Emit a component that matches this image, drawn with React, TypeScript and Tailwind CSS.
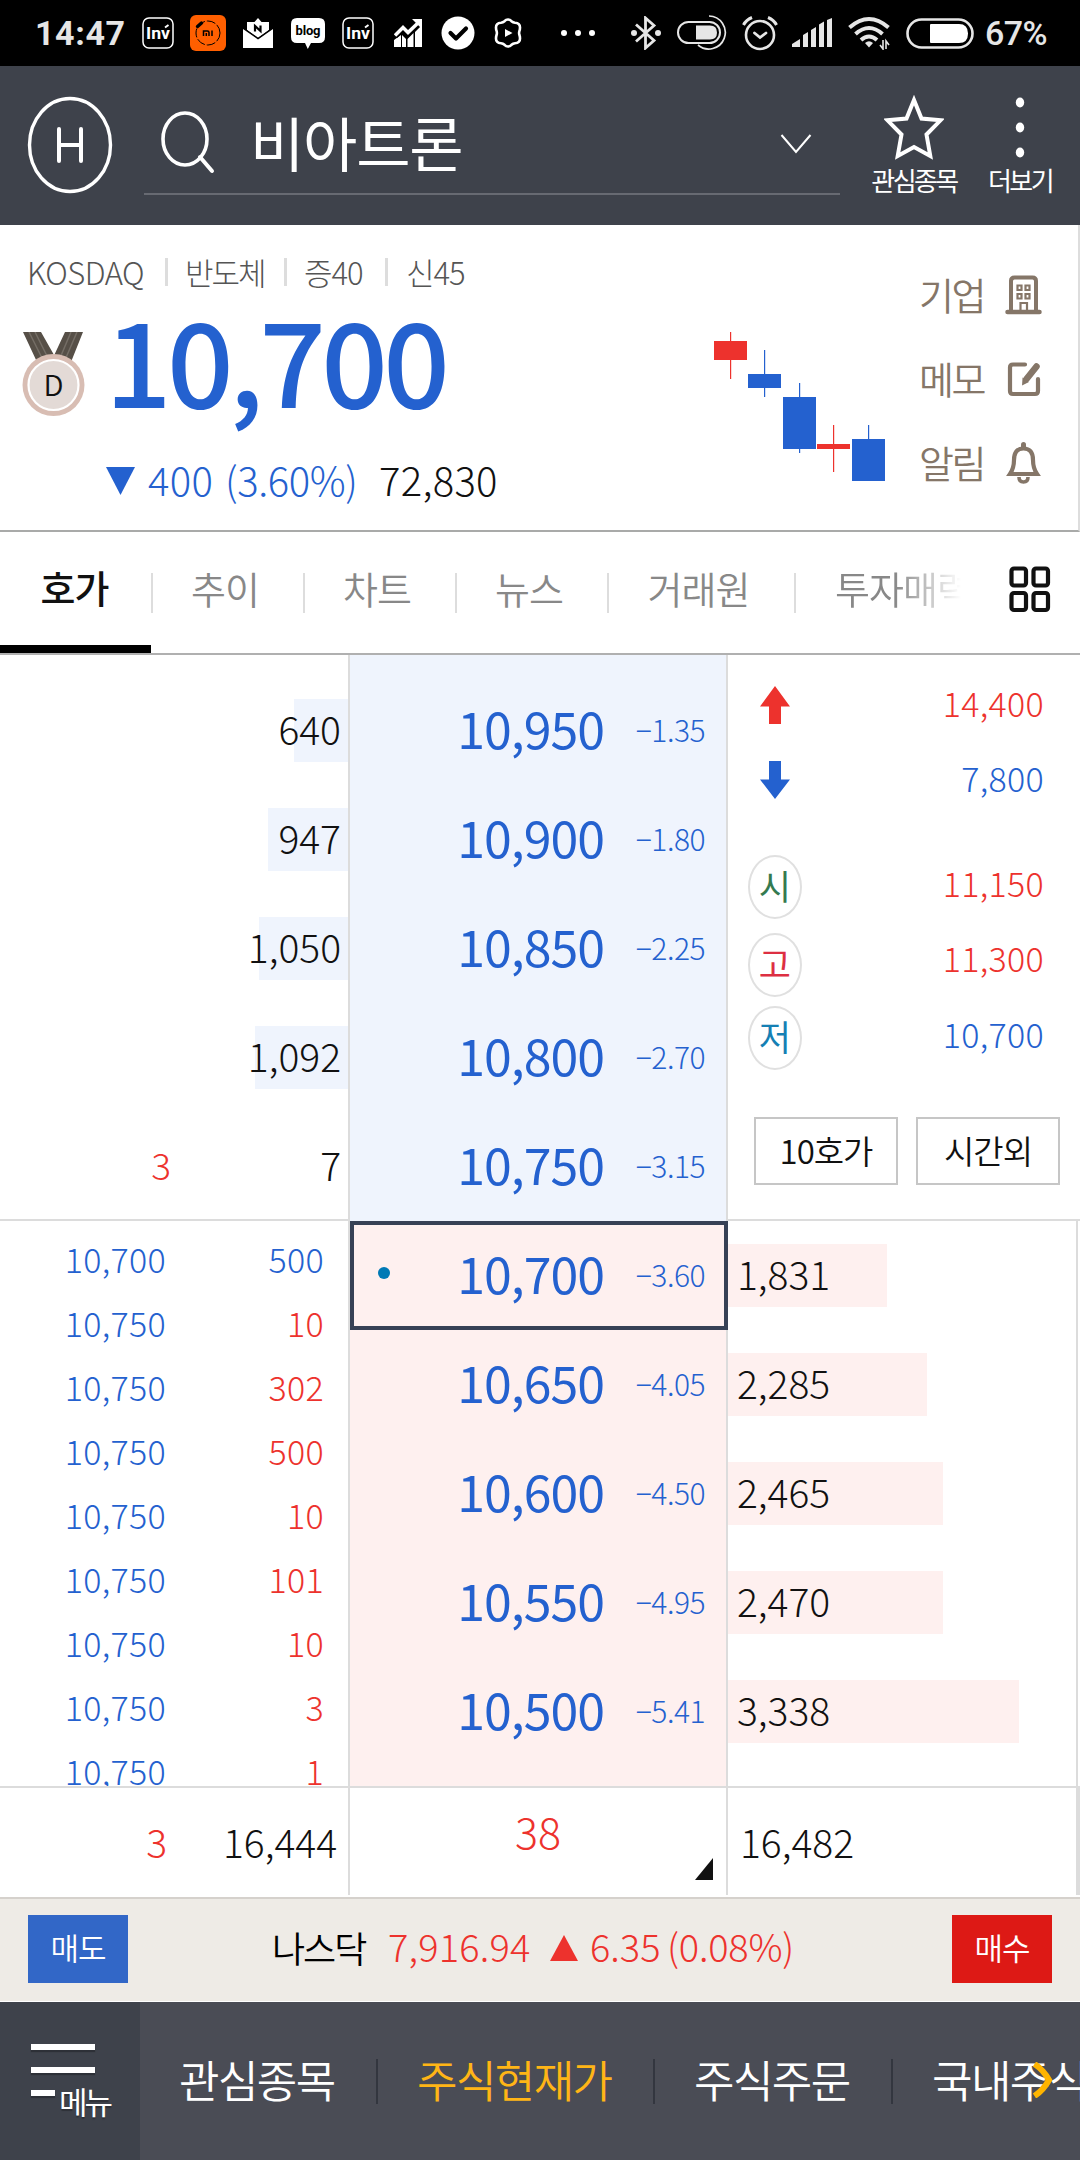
import React from "react";
import clsx from "clsx";

// ─── Data ─────────────────────────────────────────────────────────────────────
interface Ask {
  qty: string;
  bar: number;
  price: string;
  pct: string;
  diff?: string;
}

const ASKS: Ask[] = [
  { qty: "640", bar: 54, price: "10,950", pct: "−1.35" },
  { qty: "947", bar: 80, price: "10,900", pct: "−1.80" },
  { qty: "1,050", bar: 89, price: "10,850", pct: "−2.25" },
  { qty: "1,092", bar: 93, price: "10,800", pct: "−2.70" },
  { qty: "7", bar: 0, price: "10,750", pct: "−3.15", diff: "3" },
];

const BIDS = [
  { qty: "1,831", bar: 159, price: "10,700", pct: "−3.60" },
  { qty: "2,285", bar: 199, price: "10,650", pct: "−4.05" },
  { qty: "2,465", bar: 215, price: "10,600", pct: "−4.50" },
  { qty: "2,470", bar: 215, price: "10,550", pct: "−4.95" },
  { qty: "3,338", bar: 291, price: "10,500", pct: "−5.41" },
];

const TRADES = [
  { price: "10,700", qty: "500", up: false },
  { price: "10,750", qty: "10", up: true },
  { price: "10,750", qty: "302", up: true },
  { price: "10,750", qty: "500", up: true },
  { price: "10,750", qty: "10", up: true },
  { price: "10,750", qty: "101", up: true },
  { price: "10,750", qty: "10", up: true },
  { price: "10,750", qty: "3", up: true },
  { price: "10,750", qty: "1", up: true },
];

const RED = "#ed322d";
const BLUE = "#2461cf";

const CANDLES = [
  { x: 0, top: 9, h: 19, high: 0, low: 47, color: RED },
  { x: 34, top: 42, h: 14, high: 18, low: 65, color: BLUE },
  { x: 69, top: 65, h: 52, high: 51, low: 121, color: BLUE },
  { x: 103, top: 112, h: 5, high: 93, low: 140, color: RED },
  { x: 138, top: 107, h: 42, high: 93, low: 149, color: BLUE },
];

// ─── Status bar ───────────────────────────────────────────────────────────────
function InvIcon({ className }: { className: string }) {
  return (
    <svg width="32" height="32" viewBox="0 0 32 32" className={className}>
      <rect x="1" y="1" width="30" height="30" rx="6" fill="none" stroke="#fff" strokeWidth="1.5" />
      <text x="16" y="22" textAnchor="middle" fill="#fff" fontSize="17" fontWeight="700" fontFamily="Roboto, sans-serif" textLength="24" lengthAdjust="spacingAndGlyphs">
        Inv
      </text>
      <path d="M23 10.500l3.500-2.500" stroke="#fff" strokeWidth="2" />
    </svg>
  );
}

function StatusBar() {
  return (
    <div className="flex h-[66px] items-center bg-black pl-[35px] font-['Roboto',sans-serif] text-[34px] leading-none text-[#e6e6e6]">
      <span className="w-[107px] font-bold tracking-[0.6px]">14:47</span>
      <InvIcon className="" />
      <svg width="36" height="36" viewBox="0 0 36 36" className="ml-4">
        <rect width="36" height="36" rx="6" fill="#ff5f00" />
        <circle cx="18" cy="18" r="12" fill="none" stroke="#000" strokeWidth="1" strokeDasharray="9 2" />
        <path d="M7 12l5-5" stroke="#ff5f00" strokeWidth="6" />
        <path d="M7.500 11.500l4-3.500" stroke="#000" strokeWidth="3.400" strokeLinecap="round" />
        <path d="M13.500 21v-5h4q1.500 0 1.500 1.500V21M16.300 18v3M22 15.500V21" fill="none" stroke="#000" strokeWidth="1.500" />
      </svg>
      <svg width="30" height="31" viewBox="0 0 30 31" className="ml-[17px]">
        <path d="M0 10l15 11 15-11v20H0z" fill="#fff" />
        <path d="M4 4h7.500L15 0l3.500 4H26v8l-11 8-11-8z" fill="#fff" />
        <path d="M0 10l15 10.500L30 10" fill="none" stroke="#000" strokeWidth="1.500" />
        <path d="M12 13.500V8l5.500 5V7.500" fill="none" stroke="#000" strokeWidth="2.200" />
      </svg>
      <svg width="34" height="31" viewBox="0 0 34 31" className="ml-[18px]">
        <path d="M6 0h22q6 0 6 6v13q0 6-6 6h-8l-3.200 6L14 25H6q-6 0-6-6V6q0-6 6-6z" fill="#fff" />
        <text x="17" y="17" textAnchor="middle" fill="#000" fontSize="13" fontWeight="700" fontFamily="Roboto, sans-serif" textLength="25">
          blog
        </text>
      </svg>
      <InvIcon className="ml-[17px]" />
      <svg width="28" height="28" viewBox="0 0 28 28" className="ml-5">
        <path d="M0 21l7-5v12H0zM8 16l4 4v8H8zM13.500 20l6-6v14h-6zM21 13l7-7v22h-7z" fill="#fff" />
        <path d="M1 17l8-8 5 5L24 4" fill="none" stroke="#000" strokeWidth="6" />
        <path d="M1 16.500l8-8 5 5L25 3" fill="none" stroke="#fff" strokeWidth="3.500" />
        <path d="M18 0h10v10z" fill="#fff" />
      </svg>
      <svg width="34" height="34" viewBox="0 0 34 34" className="ml-[19px]">
        <circle cx="17" cy="17" r="16.500" fill="#fff" />
        <path d="M9.500 17l5.500 5.500 10-10" fill="none" stroke="#000" strokeWidth="4.200" strokeLinecap="round" strokeLinejoin="round" />
      </svg>
      <svg width="30" height="32" viewBox="0 0 30 32" className="ml-[18px]">
        <path d="M15 2.500q2 0 3.500 1.700 1.500 1.400 3.500 1.600 5 .2 5 4.700 0 2-.6 3.500-.6 2 0 4 .6 1.500.6 3.500 0 4.500-5 4.700-2 .2-3.500 1.600-1.500 1.700-3.500 1.700t-3.500-1.700q-1.500-1.400-3.500-1.600-5-.2-5-4.700 0-2 .6-3.500.6-2 0-4Q3 12.500 3 10.500q0-4.500 5-4.700 2-.2 3.500-1.600Q13 2.500 15 2.500z" fill="none" stroke="#fff" strokeWidth="2.600" />
        <path d="M12 12l7.500 4-7.500 4z" fill="#fff" />
      </svg>
      <div className="ml-[38px] flex gap-2">
        <i className="size-1.5 rounded-full bg-white" />
        <i className="size-1.5 rounded-full bg-white" />
        <i className="size-1.5 rounded-full bg-white" />
      </div>
      <svg width="30" height="34" viewBox="0 0 30 34" className="ml-[36px]">
        <path d="M5 8.500l18 16L14.500 32V2L23 9.500 5 25.500" fill="none" stroke="#e6e6e6" strokeWidth="2.800" />
        <circle cx="3" cy="17" r="3" fill="#e6e6e6" />
        <circle cx="27" cy="17" r="3" fill="#e6e6e6" />
      </svg>
      <svg width="50" height="36" viewBox="0 0 50 36" className="ml-4">
        <rect x="1" y="7" width="42" height="21" rx="10.500" fill="none" stroke="#e6e6e6" strokeWidth="2" />
        <path d="M19 10.500h14q7 0 7 7t-7 7H19z" fill="#e6e6e6" />
        <path d="M32 1a16.500 16.500 0 1 1-11 29" fill="none" stroke="#e6e6e6" strokeWidth="1.700" />
      </svg>
      <svg width="36" height="36" viewBox="0 0 36 36" className="ml-[15px]">
        <circle cx="18" cy="20" r="14" fill="none" stroke="#e6e6e6" strokeWidth="2.600" />
        <path d="M1.500 10Q4 5 10 2.500M34.500 10Q32 5 26 2.500" fill="none" stroke="#e6e6e6" strokeWidth="3" />
        <path d="M12.500 18l5.500 4.500 6-4.500" fill="none" stroke="#e6e6e6" strokeWidth="2.800" strokeLinecap="round" />
      </svg>
      <svg width="40" height="30" viewBox="0 0 40 30" className="ml-[14px]">
        <path d="M0 29v-3l8-5v8zM11 17l5-3v15h-5zM19 12l5-3v20h-5zM27 6.500l5-3V29h-5zM35 2l5-2v29h-5z" fill="#e6e6e6" />
      </svg>
      <svg width="42" height="34" viewBox="0 0 42 34" className="ml-4">
        <path d="M1.500 11.500q19.500-17 39 0M7.500 18q13.500-12 27 0M13 24q8-7 16 0" fill="none" stroke="#e6e6e6" strokeWidth="4" />
        <path d="M17 27q4-3.500 8 0l-4 4.500z" fill="#e6e6e6" />
        <path d="M35 24v9l-3-4M38 33v-8l3 4" fill="none" stroke="#e6e6e6" strokeWidth="1.600" />
      </svg>
      <svg width="68" height="31" viewBox="0 0 68 31" className="ml-4">
        <rect x="1.500" y="1.500" width="65" height="28" rx="14" fill="none" stroke="#e6e6e6" strokeWidth="2.600" />
        <path d="M25 6h28q9 0 9 9.500T53 25H25q-1 0-1-1V7q0-1 1-1z" fill="#fff" />
      </svg>
      <span className="ml-[11px] font-medium tracking-[-0.6px]">67%</span>
    </div>
  );
}

// ─── Header ───────────────────────────────────────────────────────────────────
function Header() {
  return (
    <header className="flex h-[159px] bg-[#3e424b] text-white">
      <svg width="86" height="98" viewBox="0 0 86 98" className="mt-[30px] ml-[27px]">
        <ellipse cx="43" cy="49" rx="40.500" ry="46.500" fill="none" stroke="#fff" strokeWidth="3.400" />
        <path d="M32 33v32M54 33v32M32 49h22" fill="none" stroke="#fff" strokeWidth="4" strokeLinecap="round" />
      </svg>
      <div className="ml-[31px] flex h-[129px] w-[696px] items-center border-b-2 border-[#676a72] pr-7 pl-4">
        <svg width="56" height="66" viewBox="0 0 56 66" className="mt-[28px]">
          <ellipse cx="25" cy="28" rx="22" ry="26" fill="none" stroke="#fff" strokeWidth="3.600" />
          <path d="M40 46l12 14" stroke="#fff" strokeWidth="4" strokeLinecap="round" />
        </svg>
        <span className="mt-[23px] ml-[34px] text-[59px] leading-none font-normal tracking-[-1.200px]">비아트론</span>
        <svg width="32" height="20" viewBox="0 0 32 20" className="mt-[28px] ml-auto">
          <path d="M1.500 1l14.500 17L30.500 1" fill="none" stroke="#fff" strokeWidth="2" />
        </svg>
      </div>
      <div className="ml-[30px] flex w-[88px] flex-col items-center pt-[29px]">
        <svg width="60" height="66" viewBox="0 0 60 66">
          <path d="M30 5l7.500 18.500 19 1.800-14 14.200 3.800 21.500L30 52l-16.300 9 3.800-21.500-14-14.200 19-1.800z" fill="none" stroke="#fff" strokeWidth="4" />
        </svg>
        <span className="mt-[6px] text-[26px] leading-none font-normal tracking-[-2.600px] whitespace-nowrap">관심종목</span>
      </div>
      <div className="ml-[30px] flex w-[64px] flex-col items-center pt-[31px]">
        <svg width="10" height="62" viewBox="0 0 10 62">
          <ellipse cx="5" cy="5.500" rx="4.200" ry="5" fill="#fff" />
          <ellipse cx="5" cy="30.500" rx="4.200" ry="5" fill="#fff" />
          <ellipse cx="5" cy="55.500" rx="4.200" ry="5" fill="#fff" />
        </svg>
        <span className="mt-[8px] text-[26px] leading-none font-normal tracking-[-2.600px] whitespace-nowrap">더보기</span>
      </div>
    </header>
  );
}

// ─── Quote summary ────────────────────────────────────────────────────────────
function Medal() {
  return (
    <svg width="64" height="84" viewBox="0 0 64 84">
      <path d="M1 0h18l17 30H15zM61 0H43L29 30h20z" fill="#564f47" />
      <path d="M7 0l14 28M13 0l13 26M55 0L43 28M49 0L38 26" stroke="#746d65" strokeWidth="1.500" />
      <circle cx="31.500" cy="53" r="31" fill="#d8bdb3" />
      <circle cx="31.500" cy="53" r="25" fill="#e3dad6" stroke="#fff" strokeWidth="2.200" />
      <text x="31.500" y="63.500" textAnchor="middle" fontSize="28" fontWeight="350" fill="#111" textLength="20" lengthAdjust="spacingAndGlyphs">
        D
      </text>
    </svg>
  );
}

function CandleChart() {
  return (
    <svg width="172" height="150" viewBox="0 0 172 150">
      {CANDLES.map((c) => (
        <g key={c.x} fill={c.color}>
          <rect x={c.x + 16} y={c.high} width="1.200" height={c.low - c.high} />
          <rect x={c.x} y={c.top} width="33" height={c.h} />
        </g>
      ))}
    </svg>
  );
}

function QuoteSummary() {
  return (
    <section className="flex h-[307px] border-r-2 border-b-2 border-r-[#ddd] border-b-[#a9aaa9] bg-white">
      <div className="w-[714px] shrink-0">
        <div className="mt-[31px] flex h-8 items-center pl-[27px] text-[31px] leading-none font-light text-[#555]">
          <span className="w-[138px] pb-0.5 tracking-[-0.500px]">KOSDAQ</span>
          <i className="h-7 w-[3px] bg-[#ddd]" />
          <span className="ml-[17px] w-[99px] pb-0.5 tracking-[-2px]">반도체</span>
          <i className="h-7 w-[3px] bg-[#ddd]" />
          <span className="ml-[17px] w-[81px] pb-0.5 tracking-[-1px]">증40</span>
          <i className="h-7 w-[3px] bg-[#ddd]" />
          <span className="ml-[18px] pb-0.5 tracking-[-1px]">신45</span>
        </div>
        <div className="mt-[4px] flex h-[136px] items-start pl-[22px]">
          <div className="pt-[40px]">
            <Medal />
          </div>
          <span className="ml-[19px] text-[117px] leading-[130px] font-medium tracking-[-4.700px] text-[#2461cf]">10,700</span>
        </div>
        <div className="mt-[23px] flex h-[56px] items-center pl-[106px] text-[40px] leading-none font-light">
          <svg width="30" height="28" viewBox="0 0 30 28" className="mt-1">
            <path d="M0 0h29L14.500 28z" fill={BLUE} />
          </svg>
          <span className="ml-3 w-[77px] tracking-[0.300px] text-[#2461cf]">400</span>
          <span className="w-[154px] tracking-[-0.400px] text-[#2461cf]">(3.60%)</span>
          <span className="tracking-[0.300px] text-[#111]">72,830</span>
        </div>
      </div>
      <div className="shrink-0 pt-[107px]">
        <CandleChart />
      </div>
      <div className="ml-[33px] flex w-[124px] flex-col pt-[45px] text-[38px] leading-none font-[350] tracking-[-2.500px] text-[#857668]">
        <div className="flex h-[49px] items-center justify-between">
          <span className="pb-0.5">기업</span>
          <svg width="38" height="40" viewBox="0 0 38 40">
            <path d="M6 36V6q0-3.500 3.500-3.500h18Q31 2.500 31 6v30" fill="none" stroke="#857668" strokeWidth="4" />
            <path d="M2.500 37h32" stroke="#857668" strokeWidth="4.500" strokeLinecap="round" />
            <path d="M12.500 10.500h4v4.500h-4zM20.500 10.500h4v4.500h-4zM12.500 19h4v4.500h-4zM20.500 19h4v4.500h-4zM15.500 35v-7h6.500v7" fill="none" stroke="#857668" strokeWidth="2.200" />
          </svg>
        </div>
        <div className="mt-[35px] flex h-[49px] items-center justify-between">
          <span className="pb-0.5">메모</span>
          <svg width="38" height="40" viewBox="0 0 38 40">
            <path d="M20 5.500H8q-3 0-3 3V32q0 3 3 3h22q3 0 3-3V20" fill="none" stroke="#857668" strokeWidth="4.200" strokeLinecap="round" />
            <path d="M31.500 7.500L21.500 20" stroke="#857668" strokeWidth="6.500" strokeLinecap="round" />
            <path d="M17.500 18.500l-.500 8 7-3.500z" fill="#857668" />
          </svg>
        </div>
        <div className="mt-[35px] flex h-[49px] items-center justify-between">
          <span className="pb-0.5">알림</span>
          <svg width="38" height="44" viewBox="0 0 38 44">
            <path d="M5 33q4-6 4-14Q9 7.500 18.500 7.500T28 19q0 8 4 14z" fill="none" stroke="#857668" strokeWidth="4.200" />
            <path d="M18.500 3.500v3" stroke="#857668" strokeWidth="5" strokeLinecap="round" />
            <path d="M14 36q0 5 4.500 5t4.500-5" fill="none" stroke="#857668" strokeWidth="3.600" />
          </svg>
        </div>
      </div>
    </section>
  );
}

// ─── Tabs ─────────────────────────────────────────────────────────────────────
function Tabs() {
  return (
    <nav className="flex h-[123px] items-center border-b-2 border-[#b0b0b0] bg-white text-[38px] leading-none font-[350] tracking-[-1px] text-[#888]">
      <div className="flex h-full w-[151px] items-center justify-center border-b-8 border-black pr-0.5 pb-[3px] font-medium text-[#111]">
        호가
      </div>
      <i className="h-10 w-0.5 bg-[#ddd]" />
      <span className="w-[150px] pr-1.5 pb-2.5 text-center">추이</span>
      <i className="h-10 w-0.5 bg-[#ddd]" />
      <span className="w-[150px] pr-1.5 pb-2.5 text-center">차트</span>
      <i className="h-10 w-0.5 bg-[#ddd]" />
      <span className="w-[150px] pr-1.5 pb-2.5 text-center">뉴스</span>
      <i className="h-10 w-0.5 bg-[#ddd]" />
      <span className="w-[185px] pr-1.5 pb-2.5 text-center">거래원</span>
      <i className="h-10 w-0.5 bg-[#ddd]" />
      <span className="w-[165px] overflow-hidden pb-2.5 pl-[39px] whitespace-nowrap [mask-image:linear-gradient(to_right,#000_60%,transparent_100%)]">
        투자매력
      </span>
      <svg width="42" height="47" viewBox="0 0 42 47" className="mb-1.5 ml-[48px]">
        <g fill="none" stroke="#111" strokeWidth="4.200">
          <rect x="2.500" y="2.500" width="14.500" height="17" rx="2.500" />
          <rect x="24.500" y="2.500" width="14.500" height="17" rx="2.500" />
          <rect x="2.500" y="27" width="14.500" height="17" rx="2.500" />
          <rect x="24.500" y="27" width="14.500" height="17" rx="2.500" />
        </g>
      </svg>
    </nav>
  );
}

// ─── Order book ───────────────────────────────────────────────────────────────
function PriceRow({ price, pct, current }: { price: string; pct: string; current?: boolean }) {
  return (
    <div
      className={clsx(
        "flex h-[109px] items-center leading-none text-[#2461cf]",
        current ? "-mr-0.5 border-4 border-[#374155] pr-[19px] pl-[24px]" : "pr-[21px] pl-7",
      )}
    >
      {current && <i className="mb-1.5 h-3 w-3 rounded-full bg-[#0079b5]" />}
      <span className="ml-auto pb-[7px] text-[50px] font-normal tracking-[-1px]">{price}</span>
      <span className="w-[101px] pb-1 text-right text-[30px] font-light tracking-[-0.500px]">{pct}</span>
    </div>
  );
}

function AskQuantities() {
  return (
    <div className="h-[566px] border-b-2 border-[#dcdcdc] pt-[21px]">
      {ASKS.map((a) => (
        <div key={a.price} className="relative flex h-[109px] items-center justify-end pr-[7px] pb-[5px] text-[39px] leading-none font-light">
          <i className="absolute top-[23px] right-0 h-[63px] bg-[#eff4fd]" style={{ width: a.bar }} />
          {a.diff && <span className="relative mr-[149px] text-[37px] text-[#ed322d]">{a.diff}</span>}
          <span className="relative text-[#111]">{a.qty}</span>
        </div>
      ))}
    </div>
  );
}

function TradeList() {
  return (
    <div className="h-[565px] overflow-hidden pt-[9px]">
      {TRADES.map((t, i) => (
        <div key={i} className="flex h-16 items-center pb-1.5 text-[34px] leading-none font-light tracking-[0.300px]">
          <span className="w-[166px] text-right text-[#2461cf]">{t.price}</span>
          <span className={clsx("w-[158px] text-right", t.up ? "text-[#ed322d]" : "text-[#2461cf]")}>{t.qty}</span>
        </div>
      ))}
    </div>
  );
}

function Badge({ label, className }: { label: string; className: string }) {
  return (
    <span className={clsx("flex h-16 w-[54px] items-center justify-center rounded-[50%] border-2 border-[#e0e0e0] pb-[5px] text-[35px] font-normal", className)}>
      {label}
    </span>
  );
}

function DayStats() {
  return (
    <div className="h-[566px] border-b-2 border-[#dcdcdc] pr-9 pl-5 text-[34px] leading-none font-light tracking-[0.300px] text-[#ed322d]">
      <div className="flex h-[75px] items-center justify-between pt-[26px] pl-[12px]">
        <svg width="30" height="39" viewBox="0 0 30 39">
          <path d="M15 0l15 20.500h-9V38H9V20.500H0z" fill={RED} />
        </svg>
        <span className="pb-1.5">14,400</span>
      </div>
      <div className="flex h-[75px] items-center justify-between pt-[26px] pl-[12px] text-[#2461cf]">
        <svg width="30" height="39" viewBox="0 0 30 39">
          <path d="M15 38L0 18.500h9V0h12v18.500h9z" fill={BLUE} />
        </svg>
        <span className="pb-1.5">7,800</span>
      </div>
      <div className="mt-[50px] flex h-16 items-center justify-between">
        <Badge label="시" className="text-[#347a50]" />
        <span className="pb-2">11,150</span>
      </div>
      <div className="mt-[14px] flex h-16 items-center justify-between">
        <Badge label="고" className="text-[#dd2f42]" />
        <span className="pb-3.5">11,300</span>
      </div>
      <div className="mt-[9px] flex h-16 items-center justify-between text-[#2461cf]">
        <Badge label="저" className="text-[#1580b4]" />
        <span className="pb-2">10,700</span>
      </div>
      <div className="mt-[47px] ml-[6px] flex gap-[18px] text-[33px] font-[350] tracking-[-1px] text-[#111]">
        <button className="flex h-[68px] w-36 shrink-0 items-center justify-center border-2 border-[#c6c6c6] pb-0.5">10호가</button>
        <button className="flex h-[68px] w-36 shrink-0 items-center justify-center border-2 border-[#c6c6c6] pb-0.5">시간외</button>
      </div>
    </div>
  );
}

function OrderBook() {
  return (
    <section className="flex h-[1131px] bg-white">
      <div className="w-[350px] shrink-0 border-r-2 border-[#dcdcdc]">
        <AskQuantities />
        <TradeList />
      </div>
      <div className="w-[378px] shrink-0 border-r-2 border-[#dcdcdc] bg-[#fef0ef]">
        <div className="h-[566px] bg-[#eff4fd] pt-[21px]">
          {ASKS.map((a) => (
            <PriceRow key={a.price} price={a.price} pct={a.pct} />
          ))}
        </div>
        {BIDS.map((b, i) => (
          <PriceRow key={b.price} price={b.price} pct={b.pct} current={i === 0} />
        ))}
      </div>
      <div className="w-[352px] shrink-0">
        <DayStats />
        <div className="mr-0.5 h-[565px] border-r-2 border-[#dcdcdc]">
          {BIDS.map((b) => (
            <div key={b.price} className="relative flex h-[109px] items-center pb-[5px] pl-[9px] text-[39px] leading-none font-light text-[#111]">
              <i className="absolute top-[23px] left-0 h-[63px] bg-[#fef0ef]" style={{ width: b.bar }} />
              <span className="relative">{b.qty}</span>
            </div>
          ))}
        </div>
      </div>
    </section>
  );
}

function Totals() {
  return (
    <section className="flex h-[111px] border-t-2 border-[#dcdcdc] bg-white text-[39px] leading-none font-light text-[#111]">
      <div className="mb-0.5 flex w-[350px] items-center border-r-2 border-[#dcdcdc]">
        <span className="w-[167px] text-right text-[#ed322d]">3</span>
        <span className="w-[170px] text-right">16,444</span>
      </div>
      <div className="relative mb-0.5 flex w-[378px] justify-center border-r-2 border-[#dcdcdc] pt-[21px] text-[43px] text-[#ed322d]">
        38
        <svg width="18" height="22" viewBox="0 0 18 22" className="absolute right-[13px] bottom-[15px]">
          <path d="M18 0v22H0z" fill="#111" />
        </svg>
      </div>
      <div className="mb-0.5 flex flex-1 items-center border-r-4 border-[#dcdcdc] pl-[12px]">16,482</div>
    </section>
  );
}

// ─── Footer ───────────────────────────────────────────────────────────────────
function Ticker() {
  return (
    <section className="flex h-[105px] items-center border-t-2 border-b border-t-[#d5d1cc] border-b-white bg-[#eeebe6] px-7 text-[38px] leading-none font-light text-[#ed322d]">
      <button className="mb-0.5 h-[68px] w-[100px] bg-[#3267c7] pb-1.5 text-[31px] font-[350] tracking-[-1px] text-white">매도</button>
      <span className="ml-[144px] w-[116px] pb-1.5 text-[36px] font-[350] tracking-[-2px] text-black">나스닥</span>
      <span className="w-[162px] pb-2 tracking-[0.200px] whitespace-nowrap">7,916.94</span>
      <svg width="28" height="26" viewBox="0 0 28 26" className="mb-1">
        <path d="M14 0l14 26H0z" fill={RED} />
      </svg>
      <span className="ml-[12px] w-[77px] pb-2 whitespace-nowrap">6.35</span>
      <span className="pb-2 tracking-[-0.200px]">(0.08%)</span>
      <button className="mb-0.5 ml-auto h-[68px] w-[100px] bg-[#dd1915] pb-1.5 text-[31px] font-[350] tracking-[-1px] text-white">매수</button>
    </section>
  );
}

function BottomNav() {
  return (
    <nav className="flex h-[158px] overflow-hidden bg-[#4a4c55] text-[44px] leading-none font-[350] tracking-[-1.600px] whitespace-nowrap text-white">
      <div className="w-[140px] shrink-0 bg-[#3e424b] pt-[42px] pl-[31px]">
        <i className="block h-1.5 w-16 bg-white shadow-[0_2px_1px_#0004]" />
        <i className="mt-[17px] block h-1.5 w-16 bg-white shadow-[0_2px_1px_#0004]" />
        <div className="mt-[10px] flex gap-[4px]">
          <i className="mt-[7px] block h-1.5 w-6 bg-white shadow-[0_2px_1px_#0004]" />
          <span className="text-[31px] leading-[36px] font-normal tracking-[-3px] [text-shadow:0_2px_1px_#0004]">메뉴</span>
        </div>
      </div>
      <div className="relative flex flex-1 items-center">
        <span className="w-[236px] shrink-0 pb-1 pl-[39px]">관심종목</span>
        <i className="h-[45px] w-0.5 shrink-0 bg-[#33363f]" />
        <span className="w-[275px] shrink-0 pb-1 pl-[39px] text-[#ffb516]">주식현재가</span>
        <i className="h-[45px] w-0.5 shrink-0 bg-[#33363f]" />
        <span className="w-[236px] shrink-0 pb-1 pl-[39px]">주식주문</span>
        <i className="h-[45px] w-0.5 shrink-0 bg-[#33363f]" />
        <span className="w-[46px] shrink-0 grow overflow-hidden pb-1 pl-[39px]">국내주식</span>
        <svg width="22" height="36" viewBox="0 0 22 36" className="absolute top-[60px] right-[26px]">
          <path d="M2.500 2q9 6 14.500 16Q11.500 28 2.500 34" fill="none" stroke="#ffb400" strokeWidth="6" />
        </svg>
      </div>
    </nav>
  );
}

export default function App() {
  return (
    <div className="h-[2160px] w-[1080px] overflow-hidden bg-white font-['Noto_Sans_CJK_KR','Noto_Sans',sans-serif]">
      <StatusBar />
      <Header />
      <QuoteSummary />
      <Tabs />
      <OrderBook />
      <Totals />
      <Ticker />
      <BottomNav />
    </div>
  );
}
